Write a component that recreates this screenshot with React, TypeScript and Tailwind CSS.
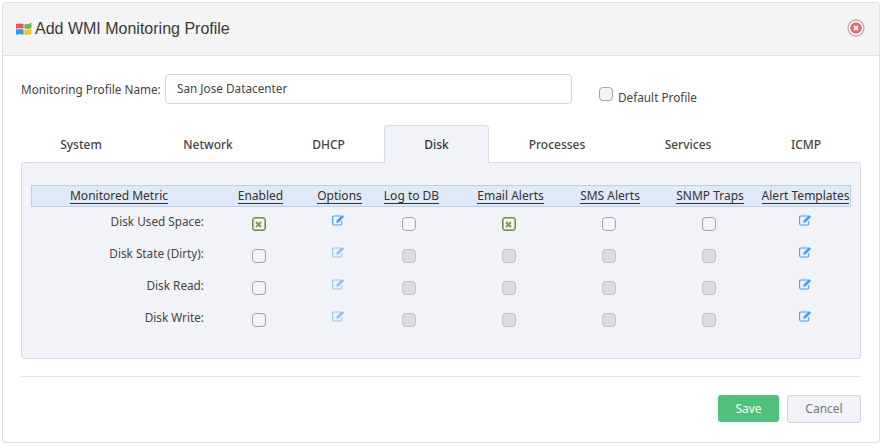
import React from "react";

const noto = "font-['Noto_Sans','Open_Sans',sans-serif]";

function WinLogo() {
  return (
    <svg width="16" height="14" viewBox="0 0 16 14" className="shrink-0">
      <path d="M0 2 Q4 0.8 7.6 2 V6.6 Q4 5.6 0 6.8 Z" fill="#ef5350" />
      <path d="M8.4 2 Q12 2.8 15.4 0.6 V6 Q12 7.4 8.4 6.6 Z" fill="#66bb4a" />
      <path d="M0 7.6 Q4 6.4 7.6 7.4 V12.6 Q4 11.6 0 12.8 Z" fill="#2f9bea" />
      <path d="M8.4 7.4 Q12 8.4 15.4 6.8 V12 Q12 13.6 8.4 12.8 Z" fill="#fbc02d" />
    </svg>
  );
}

function CloseIcon() {
  return (
    <svg width="18" height="18" viewBox="0 0 18 18">
      <circle cx="9" cy="9" r="8" fill="#fff" stroke="#b0b0b0" strokeWidth="1.3" />
      <circle cx="9" cy="9" r="5.8" fill="#e56a6f" />
      <path d="M7 7 L11 11 M11 7 L7 11" stroke="#fff" strokeWidth="1.9" />
    </svg>
  );
}

function EditIcon({ faded }: { faded?: boolean }) {
  const c = faded ? "#8cc6f8" : "#3ea2f2";
  return (
    <svg width="13" height="12" viewBox="0 0 13 12">
      <path d="M8.6 2 H2 Q0.6 2 0.6 3.4 V9.6 Q0.6 11 2 11 H8.4 Q9.8 11 9.8 9.6 V7" fill="none" stroke={c} strokeWidth="1.1" />
      <path d="M4.6 6.4 L10 1 L12 3 L6.6 8.4 L4.2 8.8 Z" fill={c} />
    </svg>
  );
}

type BoxKind = "off" | "on" | "disabled";

function Box({ kind }: { kind: BoxKind }) {
  if (kind === "on") {
    return (
      <span className="flex h-[14px] w-[14px] items-center justify-center rounded-[3px] border border-[#6f8c5a] bg-[#a3bd81]">
        <span className="flex h-[10px] w-[10px] items-center justify-center rounded-[1px] bg-[#f5f7f0]">
          <svg width="7" height="7" viewBox="0 0 7 7">
            <path d="M1 1 L6 6 M6 1 L1 6" stroke="#7d9a66" strokeWidth="2" />
          </svg>
        </span>
      </span>
    );
  }
  if (kind === "disabled") {
    return <span className="block h-[14px] w-[14px] rounded-[4px] border border-[#c2c2c2] bg-[#dcdcdc]" />;
  }
  return <span className="block h-[14px] w-[14px] rounded-[4px] border border-[#a5a5a5] bg-[#f4f4f4]" />;
}

const gridCols = "grid-cols-[174px_109px_49px_95px_103px_96px_104px_90px]";

const headers = ["Monitored Metric", "Enabled", "Options", "Log to DB", "Email Alerts", "SMS Alerts", "SNMP Traps", "Alert Templates"];

const tabs = [
  { label: "System", w: "w-[120px]" },
  { label: "Network", w: "w-[134px]" },
  { label: "DHCP", w: "w-[107px] mr-[2px]" },
  { label: "Disk", w: "w-[105px]", active: true },
  { label: "Processes", w: "w-[136px]" },
  { label: "Services", w: "w-[126px]" },
  { label: "ICMP", w: "w-[110px]" },
];

const off4: BoxKind[] = ["disabled", "disabled", "disabled", "disabled"];

const rows: { label: string; enabled: BoxKind; optFaded: boolean; rest: BoxKind[] }[] = [
  { label: "Disk Used Space:", enabled: "on", optFaded: false, rest: ["off", "on", "off", "off"] },
  { label: "Disk State (Dirty):", enabled: "off", optFaded: true, rest: off4 },
  { label: "Disk Read:", enabled: "off", optFaded: true, rest: off4 },
  { label: "Disk Write:", enabled: "off", optFaded: true, rest: off4 },
];

const restPad = ["pr-[3px]", "pr-[2px]", "", ""];

export default function App() {
  return (
    <div className={`h-[446px] w-[882px] overflow-hidden bg-white pl-[2px] pt-[2px] text-[12px] text-[#333] ${noto}`}>
      <div className="h-[441px] w-[878px] rounded-[3px] border border-[#e0e0e0] bg-white">
        <div className="flex h-[53px] items-center justify-between border-b border-[#e2e2e2] bg-[#f4f4f4] pl-[13px] pr-[14px]">
          <div className="flex items-center gap-[3px]">
            <WinLogo />
            <span className="font-['Liberation_Sans',sans-serif] text-[16px] text-[#3a3a3a]">Add WMI Monitoring Profile</span>
          </div>
          <div className="pb-[2px]"><CloseIcon /></div>
        </div>

        <div className="px-[18px]">
          <div className="flex h-[69px] items-start pt-[18px]">
            <span className="mt-[7px] w-[144px] whitespace-nowrap text-[11.75px] text-[#444]">Monitoring Profile Name:</span>
            <div className="flex h-[30px] w-[407px] items-center rounded-[4px] border border-[#d5d5d5] bg-white pb-[1px] pl-[11px] text-[11.75px] text-[#444]">
              San Jose Datacenter
            </div>
            <div className="ml-[27px] flex items-start">
              <span className="mt-[13px] block h-[14px] w-[14px] rounded-[4px] border border-[#a5a5a5] bg-[#f4f4f4]" />
              <span className="ml-[5px] mt-[18px] whitespace-nowrap text-[11.75px] leading-none text-[#444]">Default Profile</span>
            </div>
          </div>

          <div className="flex h-[37px] items-stretch">
            {tabs.map((t) =>
              t.active ? (
                <div
                  key={t.label}
                  className={`${t.w} z-10 -mb-px flex items-center justify-center rounded-t-[4px] border border-b-0 border-[#d8dbe6] bg-[#f1f3f9] font-medium text-[#333]`}
                >
                  {t.label}
                </div>
              ) : (
                <div key={t.label} className={`${t.w} flex items-center justify-center pt-[2px] font-medium text-[#444]`}>
                  {t.label}
                </div>
              )
            )}
          </div>

          <div className="h-[197px] rounded-[3px] border border-[#d8dbe6] bg-[#f1f3f9] pl-[9px] pt-[22px]">
            <div className={`grid ${gridCols} h-[22px] w-[820px] items-center border border-[#b5d3ec] bg-[#dfeaf6]`}>
              {headers.map((h, i) => (
                <div key={h} className={i === 7 ? "flex justify-center pr-[3px]" : "flex justify-center"}>
                  <span className="whitespace-nowrap border-b border-[#333] leading-[14px] text-[#333]">{h}</span>
                </div>
              ))}
            </div>
            {rows.map((r) => (
              <div key={r.label} className={`grid ${gridCols} h-[32px] w-[820px] items-center`}>
                <div className="pb-[2px] pr-[1px] text-right text-[11.75px] text-[#444]">{r.label}</div>
                <div className="flex justify-center pr-[2px] pt-[2px]"><Box kind={r.enabled} /></div>
                <div className="-mt-[7px] flex justify-center"><EditIcon faded={r.optFaded} /></div>
                {r.rest.map((k, i) => (
                  <div key={i} className={`flex justify-center pt-[2px] ${restPad[i]}`}><Box kind={k} /></div>
                ))}
                <div className="-mt-[7px] flex justify-center pr-[2px]"><EditIcon /></div>
              </div>
            ))}
          </div>

          <div className="mt-[17px] border-t border-[#e4e4e4]" />

          <div className="mt-[18px] flex justify-end gap-[8px]">
            <button className="h-[27px] w-[61px] rounded-[3px] bg-[#4fc17c] text-[12px] text-white">Save</button>
            <button className="h-[28px] w-[74px] rounded-[3px] border border-[#cfd2dc] bg-[#f1f3f9] text-[12px] text-[#777]">Cancel</button>
          </div>
        </div>
      </div>
    </div>
  );
}
